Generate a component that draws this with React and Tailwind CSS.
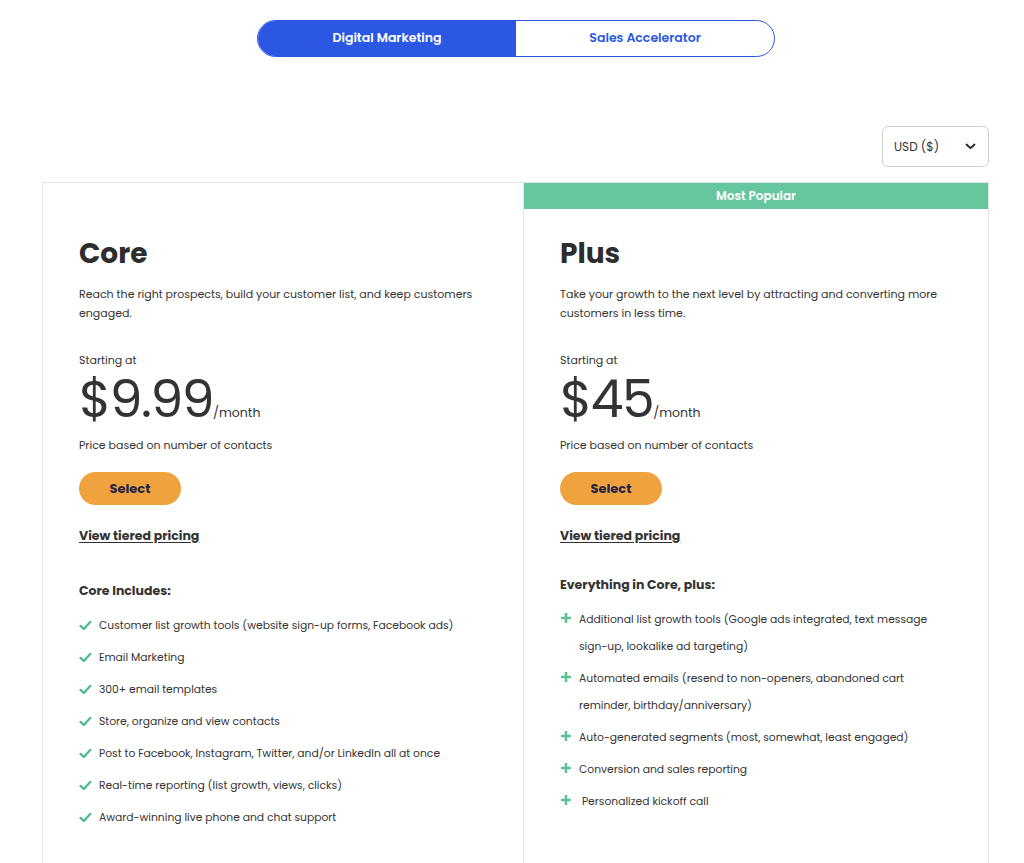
import React from "react";

const font = { fontFamily: "Poppins, Inter, 'Open Sans', sans-serif" };

const coreItems = [
  "Customer list growth tools (website sign-up forms, Facebook ads)",
  "Email Marketing",
  "300+ email templates",
  "Store, organize and view contacts",
  "Post to Facebook, Instagram, Twitter, and/or LinkedIn all at once",
  "Real-time reporting (list growth, views, clicks)",
  "Award-winning live phone and chat support",
];

const plusItems = [
  "Additional list growth tools (Google ads integrated, text message sign-up, lookalike ad targeting)",
  "Automated emails (resend to non-openers, abandoned cart reminder, birthday/anniversary)",
  "Auto-generated segments (most, somewhat, least engaged)",
  "Conversion and sales reporting",
  " Personalized kickoff call",
];

const Check = () => (
  <svg width="13" height="11" viewBox="0 0 13 11" className="shrink-0 mt-[4px]">
    <path d="M1.5 5.8 L4.8 9 L11.5 1.8" fill="none" stroke="#4cb88a" strokeWidth="2.2" strokeLinecap="round" strokeLinejoin="round" />
  </svg>
);

const Plus = () => (
  <svg width="12" height="12" viewBox="0 0 12 12" className="shrink-0">
    <path d="M6 1 V11 M1 6 H11" fill="none" stroke="#5cc293" strokeWidth="2.6" />
  </svg>
);

const PlanBody = ({ name, desc, price, heading, children }) => (
  <div className="pl-[36px] pr-[30px] pb-10">
    <h2 className="text-[28px] font-bold text-[#2d2d2d] leading-[36px]">{name}</h2>
    <p className="mt-[13px] text-[11px] leading-[19px] text-[#333]">{desc}</p>
    <div className="mt-[29px] text-[11px] leading-[16px] text-[#333]">Starting at</div>
    <div className="flex items-baseline text-[#333] mt-[7px]">
      <span className="text-[52px] leading-[48px] font-normal tracking-[-1.5px]">{price}</span>
      <span className="text-[12.5px]">/month</span>
    </div>
    <div className="mt-[14px] text-[11px] leading-[16px] text-[#333]">Price based on number of contacts</div>
    <button className="mt-[19px] w-[102px] h-[33px] rounded-full bg-[#f0a23e] text-[13px] font-bold text-[#1e2546]">
      Select
    </button>
    <div className="mt-[22px] text-[12.5px] font-bold text-[#333] underline underline-offset-2">View tiered pricing</div>
    <div className={`${heading.top} text-[12.5px] font-bold text-[#333]`}>{heading.text}</div>
    {children}
  </div>
);

export default function App() {
  return (
    <div className="w-[1024px] bg-white min-h-[863px]" style={font}>
      <div className="flex justify-center pt-5 pl-2">
        <div className="flex w-[518px] h-[37px] rounded-full border border-[#2b57e3] overflow-hidden">
          <div className="w-1/2 bg-[#2b57e3] text-white text-[12.5px] font-semibold flex items-center justify-center">
            Digital Marketing
          </div>
          <div className="w-1/2 text-[#2b57e3] text-[12.5px] font-semibold flex items-center justify-center">
            Sales Accelerator
          </div>
        </div>
      </div>

      <div className="flex justify-end pr-[35px] mt-[69px]">
        <div className="w-[107px] h-[41px] border border-[#cfcfcf] rounded-md flex items-center justify-between pl-[11px] pr-[12px] text-[12px] text-[#333]">
          <span>USD ($)</span>
          <svg width="11" height="7" viewBox="0 0 11 7">
            <path d="M1.5 1.5 L5.5 5.2 L9.5 1.5" fill="none" stroke="#222" strokeWidth="1.8" strokeLinecap="round" strokeLinejoin="round" />
          </svg>
        </div>
      </div>

      <div className="ml-[42px] w-[947px] mt-[15px] grid grid-cols-[481px_1fr] border border-[#e4e4e4] min-h-[700px]">
        <div className="border-r border-[#e4e4e4] pt-[53px]">
          <PlanBody
            name="Core"
            desc="Reach the right prospects, build your customer list, and keep customers engaged."
            price="$9.99"
            heading={{ text: "Core Includes:", top: "mt-[36px]" }}
          >
            <ul className="mt-[15px] flex flex-col gap-[13px]">
              {coreItems.map((t) => (
                <li key={t} className="flex gap-[7px] text-[10.75px] leading-[19px] text-[#333]">
                  <Check />
                  <span>{t}</span>
                </li>
              ))}
            </ul>
          </PlanBody>
        </div>
        <div>
          <div className="h-[26px] bg-[#66c79f] text-white text-[12px] font-semibold flex items-center justify-center">
            Most Popular
          </div>
          <div className="pt-[27px]">
            <PlanBody
              name="Plus"
              desc="Take your growth to the next level by attracting and converting more customers in less time."
              price="$45"
              heading={{ text: "Everything in Core, plus:", top: "mt-[30px]" }}
            >
              <ul className="mt-[11px] flex flex-col gap-[5px]">
                {plusItems.map((t) => (
                  <li key={t} className="flex gap-[7px] text-[10.75px] leading-[27px] text-[#333]">
                    <span className="h-[25px] flex items-center"><Plus /></span>
                    <span className="whitespace-pre-wrap">{t}</span>
                  </li>
                ))}
              </ul>
            </PlanBody>
          </div>
        </div>
      </div>
    </div>
  );
}
